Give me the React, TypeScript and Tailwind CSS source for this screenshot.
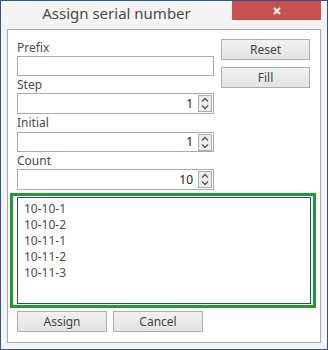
import React from "react";

const font = { fontFamily: '"Noto Sans", "Open Sans", sans-serif' };

function Spinner() {
  return (
    <div className="w-[14px] h-[17px] border border-[#adadad] bg-[#ececec] flex items-center justify-center">
      <svg width="10" height="15" viewBox="0 0 10 15" fill="none">
        <path d="M2 5.5 L5 2.5 L8 5.5" stroke="#555" strokeWidth="1.3" />
        <path d="M2 9.5 L5 12.5 L8 9.5" stroke="#555" strokeWidth="1.3" />
      </svg>
    </div>
  );
}

function NumberBox({ value, h }: { value: string; h: string }) {
  return (
    <div className={`${h} w-[197px] border border-[#ababab] bg-white flex items-center justify-end pr-[1px]`}>
      <span className="text-[12px] text-[#222] mr-[5px]">{value}</span>
      <Spinner />
    </div>
  );
}

function Btn({ label, w }: { label: string; w: string }) {
  return (
    <button className={`${w} h-[21px] border border-[#adadad] bg-gradient-to-b from-[#f2f2f2] to-[#e3e3e3] text-[12px] text-[#444] leading-none flex items-center justify-center`}>
      {label}
    </button>
  );
}

export default function App() {
  const rows = ["10-10-1", "10-10-2", "10-11-1", "10-11-2", "10-11-3"];
  return (
    <div style={font} className="w-[328px] h-[350px] border border-[#2b579a] bg-[#f4f4f4] flex flex-col overflow-hidden">
      <div className="h-[28px] flex items-start shrink-0">
        <div className="flex-1 text-center text-[15px] text-[#4a4a4a] pt-[5px] leading-none">Assign serial number</div>
        <div className="w-[89px] h-[19px] mr-[6px] bg-[#c75050] flex items-center justify-center">
          <svg width="8" height="8" viewBox="0 0 8 8">
            <path d="M1 1 L7 7 M7 1 L1 7" stroke="#fff" strokeWidth="2" />
          </svg>
        </div>
      </div>

      <div className="mx-[6px] h-[314px] border border-[#a8a8a8] bg-white flex flex-col pt-[9px] shrink-0">
        <div className="flex pl-[9px] gap-[7px] text-[12px] text-[#4a4a4a]">
          <div className="flex flex-col w-[197px]">
            <div className="h-[17px] leading-[17px]">Prefix</div>
            <div className="h-[20px] border border-[#ababab] bg-white" />
            <div className="h-[17px] leading-[17px]">Step</div>
            <NumberBox value="1" h="h-[21px]" />
            <div className="h-[18px] leading-[18px]">Initial</div>
            <NumberBox value="1" h="h-[20px]" />
            <div className="h-[17px] leading-[17px]">Count</div>
            <NumberBox value="10" h="h-[21px]" />
          </div>
          <div className="flex flex-col gap-[7px]">
            <Btn label="Reset" w="w-[89px]" />
            <Btn label="Fill" w="w-[89px]" />
          </div>
        </div>

        <div className="ml-[2px] mt-[3px] w-[306px] h-[115px] border-[3px] border-[#1c9e2c] pl-[4px] pr-[2px] pt-[1px] pb-[1px]">
          <div className="h-full border border-[#2b4a8b] bg-white pl-[6px] pt-[3px] text-[12px] text-[#4a4a4a]">
            {rows.map((r) => (
              <div key={r} className="h-[16px] leading-[16px]">{r}</div>
            ))}
          </div>
        </div>

        <div className="flex gap-[6px] pl-[9px] mt-[3px]">
          <Btn label="Assign" w="w-[90px]" />
          <Btn label="Cancel" w="w-[90px]" />
        </div>
      </div>
    </div>
  );
}
